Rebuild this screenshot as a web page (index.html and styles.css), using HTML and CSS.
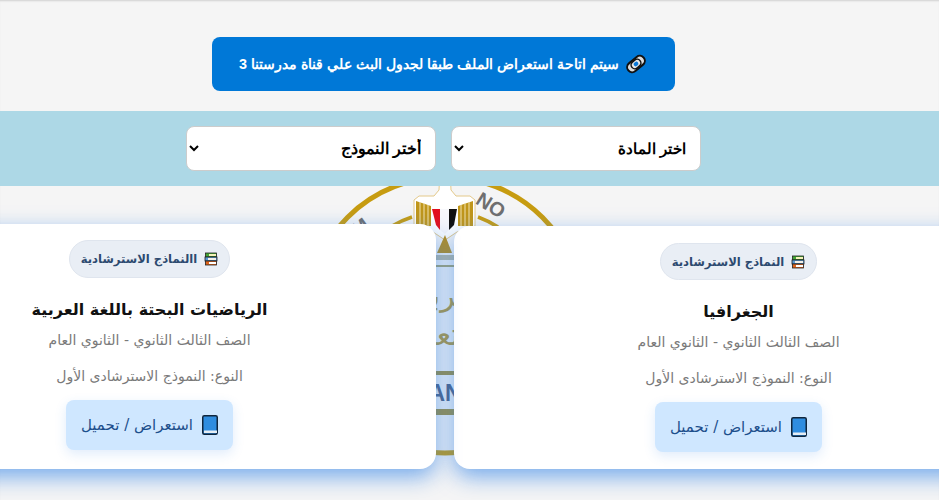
FILE: index.html
```html
<!DOCTYPE html>
<html lang="ar" dir="rtl">
<head>
    <meta charset="UTF-8">
    <title>النماذج الاسترشادية</title>
    <link rel="stylesheet" href="styles.css">
</head>
<body>

<div class="notice-wrap">
    <div class="notice">
        <svg class="icon-link" viewBox="0 0 24 24" width="24" height="24">
            <g transform="rotate(-40 12 12)">
                <rect x="1" y="6" width="22" height="12" rx="6" fill="#111"/>
                <rect x="3" y="8" width="18" height="8" rx="4" fill="#ddd"/>
                <rect x="6" y="7.5" width="12" height="9" rx="4.5" fill="#111"/>
                <rect x="7.5" y="9" width="9" height="6" rx="3" fill="#e8e8e8"/>
                <rect x="9.5" y="10" width="5" height="4" rx="2" fill="#0a78d8"/>
            </g>
        </svg>
        <span>سيتم اتاحة استعراض الملف طبقا لجدول البث علي قناة مدرستنا 3</span>
    </div>
</div>

<div class="filter-bar">
    <select class="filter-select filter-subject">
        <option>اختر المادة</option>
    </select>
    <select class="filter-select">
        <option>أختر النموذج</option>
    </select>
</div>

<main class="content">
    <!-- Watermark behind the cards -->
    <svg class="watermark" viewBox="300 170 290 290" width="290" height="290">
        <circle cx="445" cy="315" r="138" fill="none" stroke="#c79c10" stroke-width="5"/>
        <path d="M392 226 A103 103 0 0 1 412 217 M478 217 A103 103 0 0 1 498 227" fill="none" stroke="#c79c10" stroke-width="3.5"/>
        <text x="371" y="228" class="wm-ring" transform="rotate(-36 371 228)">M</text>
        <text x="500" y="219" class="wm-ring" transform="rotate(32 500 219)">NO</text>
        <path d="M440 170 H450 L451 190 L456 196 L470 196 L475 200 L475 226 L457 232 L445 240 L433 232 L414 226 L414 200 L419 196 L434 196 L439 190 Z" fill="#fff" stroke="#e4c98a" stroke-width="1"/>
        <path d="M416 201 L431 206 V226 H416 Z M473 201 L458 206 V226 H473 Z" fill="#c0961a"/>
        <path d="M420 202 V226 M424 203 V226 M428 205 V226 M461 205 V226 M465 203 V226 M469 202 V226" stroke="#f3e3b0" stroke-width="1"/>
        <path d="M432 209 H440 V230 L436 225 Z" fill="#e3101e"/>
        <path d="M440 209 H449 V230 L445 234 L440 230 Z" fill="#f7f7fb"/>
        <path d="M449 209 H457 L454 225 L449 230 Z" fill="#111"/>
        <path d="M445 235 L452 253 H437 Z" fill="#b98e1a"/>
        <rect x="436" y="255" width="18" height="5" fill="#b9b9a5"/>
        <rect x="436" y="265" width="18" height="2" fill="#a8a46e"/>
        <text x="445" y="306" class="wm-script">التربية</text>
        <text x="445" y="345" class="wm-script">والتعليم</text>
        <rect x="436" y="371" width="18" height="4" fill="#a08f3e"/>
        <text x="445" y="401" class="wm-label">AN</text>
        <rect x="436" y="409" width="18" height="6" fill="#a08f3e"/>
    </svg>

    <div class="cards">
        <article class="card card-short">
            <div class="badge">
                <svg class="icon-books" viewBox="0 0 14 14" width="14" height="14">
                    <rect x="1.5" y="1" width="11" height="4" fill="#43a635" stroke="#222" stroke-width="0.8"/>
                    <rect x="1" y="5" width="12" height="4" fill="#5b9bd5" stroke="#222" stroke-width="0.8"/>
                    <rect x="1.5" y="9" width="11" height="4" fill="#e0651c" stroke="#222" stroke-width="0.8"/>
                    <rect x="5" y="2" width="7" height="2" fill="#f6f3b8"/>
                    <rect x="4" y="6" width="8" height="2" fill="#f3f0e8"/>
                    <rect x="5" y="10" width="7" height="2" fill="#fff"/>
                </svg>
                <span>النماذج الاسترشادية</span>
            </div>
            <h3 class="card-title">الجغرافيا</h3>
            <p class="card-meta">الصف الثالث الثانوي - الثانوي العام</p>
            <p class="card-meta">النوع: النموذج الاسترشادى الأول</p>
            <a class="card-btn" href="#">
                <svg class="icon-book" viewBox="0 0 16 20" width="16" height="20">
                    <rect x="0.75" y="0.75" width="14.5" height="18.5" rx="1.5" fill="#2f8de0" stroke="#10263d" stroke-width="1.5"/>
                    <rect x="2" y="15.5" width="13" height="2.5" fill="#e6eef5"/>
                </svg>
                <span>استعراض / تحميل</span>
            </a>
        </article>

        <article class="card">
            <div class="badge">
                <svg class="icon-books" viewBox="0 0 14 14" width="14" height="14">
                    <rect x="1.5" y="1" width="11" height="4" fill="#43a635" stroke="#222" stroke-width="0.8"/>
                    <rect x="1" y="5" width="12" height="4" fill="#5b9bd5" stroke="#222" stroke-width="0.8"/>
                    <rect x="1.5" y="9" width="11" height="4" fill="#e0651c" stroke="#222" stroke-width="0.8"/>
                    <rect x="5" y="2" width="7" height="2" fill="#f6f3b8"/>
                    <rect x="4" y="6" width="8" height="2" fill="#f3f0e8"/>
                    <rect x="5" y="10" width="7" height="2" fill="#fff"/>
                </svg>
                <span>االنماذج الاسترشادية</span>
            </div>
            <h3 class="card-title">الرياضيات البحتة باللغة العربية</h3>
            <p class="card-meta">الصف الثالث الثانوي - الثانوي العام</p>
            <p class="card-meta">النوع: النموذج الاسترشادى الأول</p>
            <a class="card-btn" href="#">
                <svg class="icon-book" viewBox="0 0 16 20" width="16" height="20">
                    <rect x="0.75" y="0.75" width="14.5" height="18.5" rx="1.5" fill="#2f8de0" stroke="#10263d" stroke-width="1.5"/>
                    <rect x="2" y="15.5" width="13" height="2.5" fill="#e6eef5"/>
                </svg>
                <span>استعراض / تحميل</span>
            </a>
        </article>
    </div>
</main>

</body>
</html>
```

FILE: styles.css
```css
* {
    box-sizing: border-box;
}

html, body {
    height: 100%;
    margin: 0;
    overflow: hidden;
}

body {
    background-color: #f5f5f5;
    box-shadow: inset 0 2px 2px -1px rgba(0, 0, 0, 0.15);
    font-family: "DejaVu Sans", sans-serif;
}

.notice-wrap {
    display: flex;
    justify-content: center;
    padding: 37px 52px 20px 0;
}

.notice {
    display: flex;
    align-items: center;
    justify-content: center;
    gap: 5px;
    width: 463px;
    height: 54px;
    background-color: #0078d7;
    border-radius: 8px;
    color: #fff;
    font-family: "Liberation Sans", sans-serif;
    font-size: 14.4px;
    font-weight: bold;
}

.filter-bar {
    position: relative;
    z-index: 1;
    display: flex;
    justify-content: center;
    gap: 15px;
    height: 75px;
    padding: 15px 52px 0 0;
    background-color: #add8e6;
}

.filter-select {
    width: 250px;
    height: 45px;
    padding: 0 10px;
    background-color: #fff;
    border: 1px solid #ccc;
    border-radius: 8px;
    color: #000;
    font-family: "Liberation Sans", sans-serif;
    font-size: 16px;
    font-weight: bold;
}

.filter-subject {
    font-size: 15px;
}

.content {
    position: relative;
    padding-top: 38px;
}

.watermark {
    position: absolute;
    top: -16px;
    left: 300px;
}

.wm-ring {
    fill: #6f6f6f;
    font-family: "Liberation Sans", sans-serif;
    font-size: 20px;
    font-weight: bold;
}

.wm-script {
    fill: #b4983a;
    font-size: 30px;
    text-anchor: middle;
}

.wm-label {
    fill: #4f6182;
    font-family: "Liberation Sans", sans-serif;
    font-size: 23px;
    font-weight: bold;
    text-anchor: middle;
}

.cards {
    position: relative;
    display: grid;
    grid-template-columns: 569px 573px;
    gap: 18px;
    width: 1160px;
    margin-right: -84px;
}

.card {
    display: flex;
    flex-direction: column;
    align-items: center;
    height: 245px;
    padding-top: 16px;
    background-color: #fff;
    border-radius: 16px;
    box-shadow: 0 8px 22px rgba(50, 130, 230, 0.65);
}

.card-short {
    height: 243px;
    margin-top: 2px;
    padding-top: 17px;
}

.badge {
    display: flex;
    align-items: center;
    gap: 7px;
    height: 38px;
    padding: 0 11px;
    background-color: #e9eef5;
    border: 1px solid #dfe5ee;
    border-radius: 19px;
    color: #2d4a70;
    font-size: 11.6px;
    font-weight: bold;
}

.card-short .badge {
    height: 37px;
}

.card-title {
    margin: 22px 0 3px 0;
    color: #111;
    font-size: 16px;
    font-weight: bold;
}

.card-meta {
    margin: 10px 0 10px 0;
    color: #7a7a7a;
    font-size: 14px;
}

.card-btn {
    display: flex;
    align-items: center;
    gap: 9px;
    height: 50px;
    margin-top: 6px;
    padding: 0 15px;
    background-color: #cfe7ff;
    border-radius: 8px;
    box-shadow: 0 4px 12px rgba(50, 130, 230, 0.15);
    color: #1d4f8c;
    font-size: 15px;
    text-decoration: none;
}
```
